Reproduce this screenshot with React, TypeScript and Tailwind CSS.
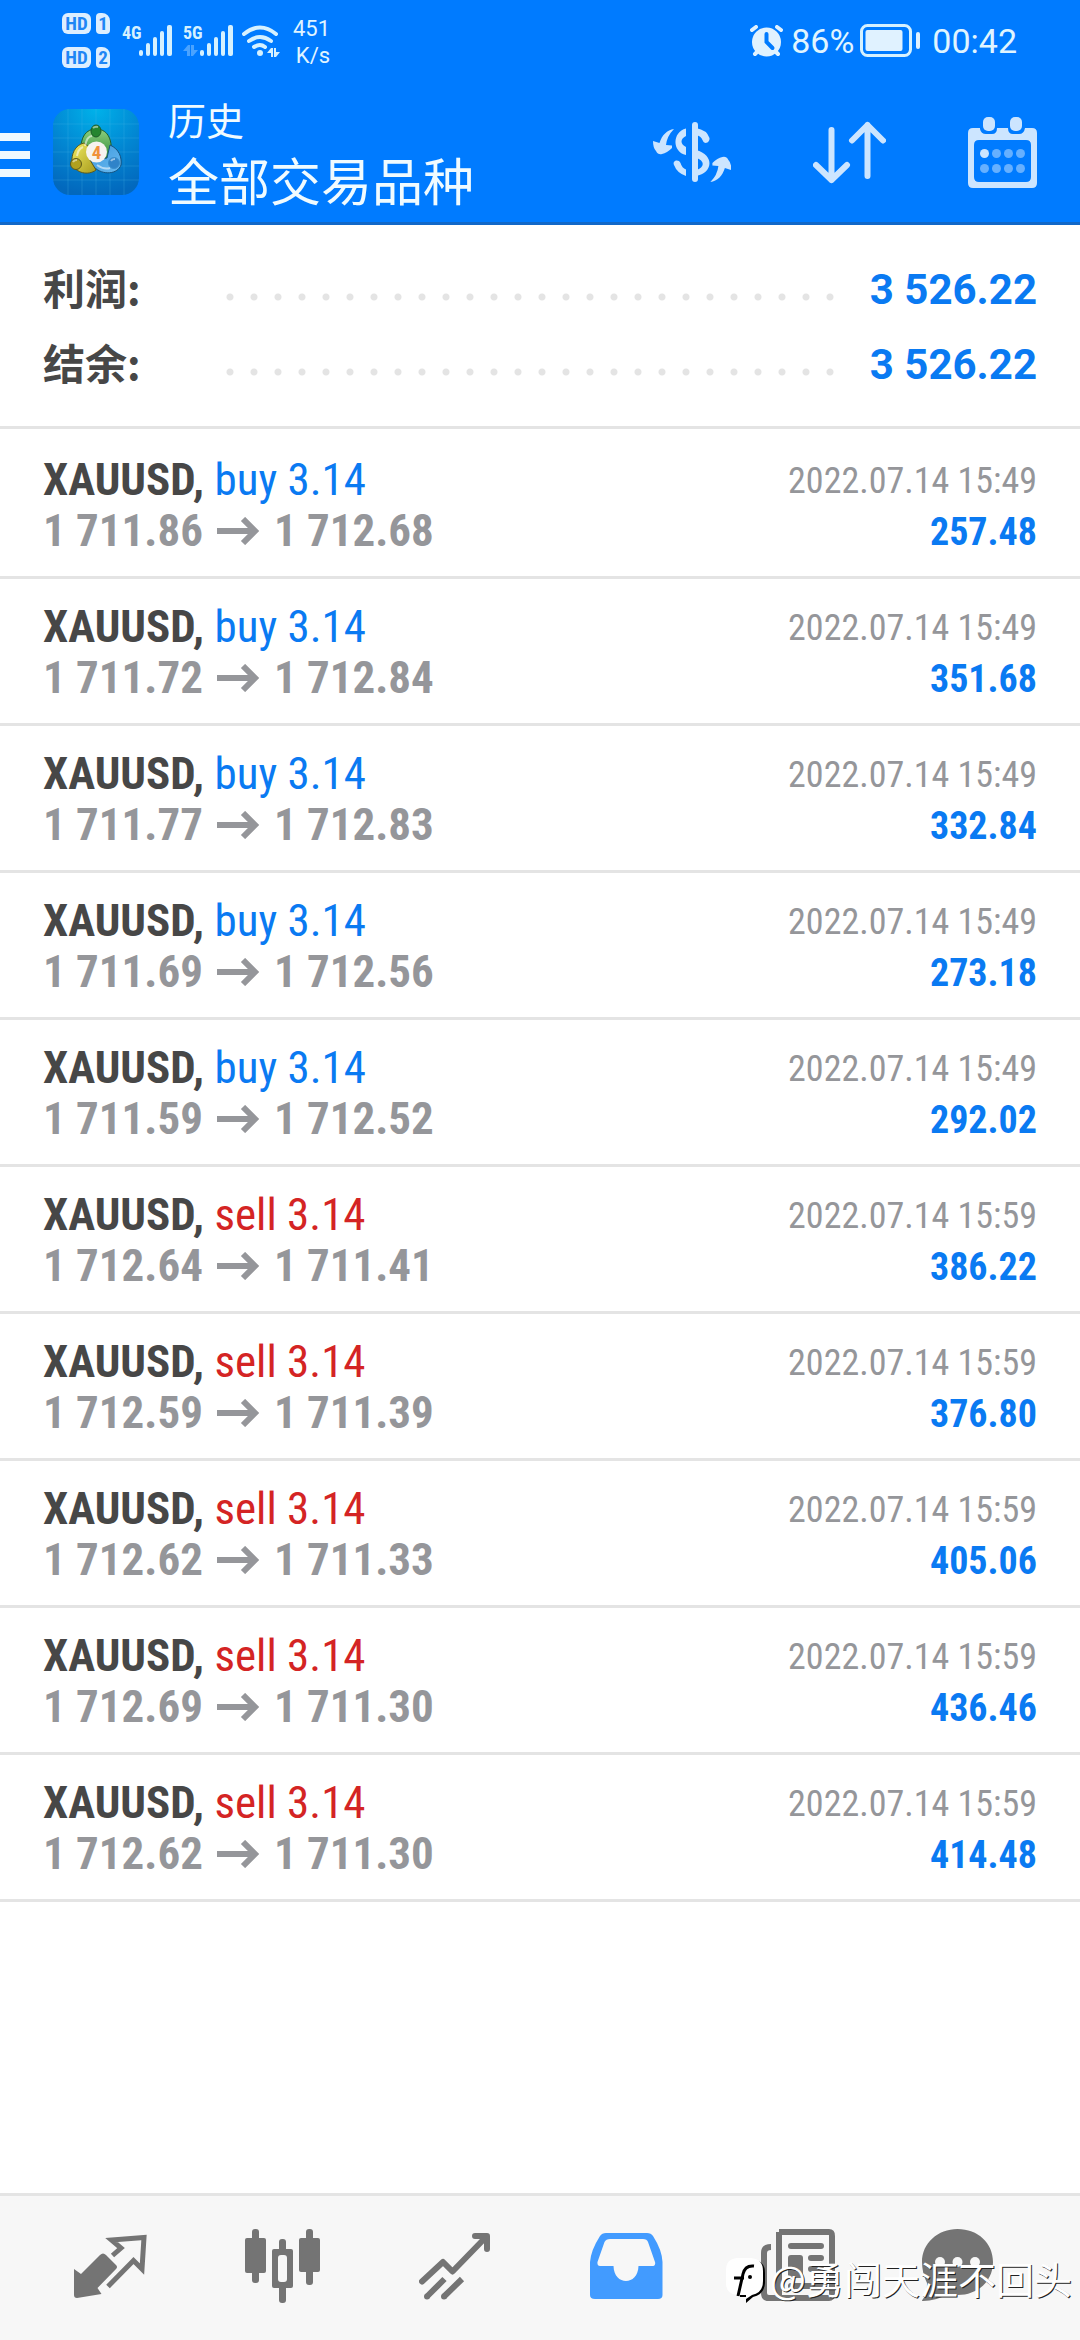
type Trade = {
	side: "buy" | "sell";
	open: string;
	close: string;
	time: string;
	profit: string;
};

const trades: Trade[] = [
	{ side: "buy", open: "1 711.86", close: "1 712.68", time: "2022.07.14 15:49", profit: "257.48" },
	{ side: "buy", open: "1 711.72", close: "1 712.84", time: "2022.07.14 15:49", profit: "351.68" },
	{ side: "buy", open: "1 711.77", close: "1 712.83", time: "2022.07.14 15:49", profit: "332.84" },
	{ side: "buy", open: "1 711.69", close: "1 712.56", time: "2022.07.14 15:49", profit: "273.18" },
	{ side: "buy", open: "1 711.59", close: "1 712.52", time: "2022.07.14 15:49", profit: "292.02" },
	{ side: "sell", open: "1 712.64", close: "1 711.41", time: "2022.07.14 15:59", profit: "386.22" },
	{ side: "sell", open: "1 712.59", close: "1 711.39", time: "2022.07.14 15:59", profit: "376.80" },
	{ side: "sell", open: "1 712.62", close: "1 711.33", time: "2022.07.14 15:59", profit: "405.06" },
	{ side: "sell", open: "1 712.69", close: "1 711.30", time: "2022.07.14 15:59", profit: "436.46" },
	{ side: "sell", open: "1 712.62", close: "1 711.30", time: "2022.07.14 15:59", profit: "414.48" },
];

const summary: [label: string, value: string][] = [
	["利润:", "3 526.22"],
	["结余:", "3 526.22"],
];

function HdBadge({ sim }: { sim: string }) {
	return (
		<div className="flex gap-[5px] font-['Roboto_Condensed',Roboto,sans-serif] font-bold text-[#1f86f5] text-[19px] leading-[21px]">
			<span className="w-[29px] rounded-md bg-[#dceeff] text-center">HD</span>
			<span className="w-[14px] rounded-sm rounded-tr-lg bg-[#dceeff] text-center">{sim}</span>
		</div>
	);
}

function SignalBars() {
	return (
		<svg width="33" height="31" viewBox="0 0 33 31" fill="#d5f1ff">
			<rect x="0" y="25" width="4" height="6" rx="2" />
			<rect x="7" y="18" width="4" height="13" rx="2" />
			<rect x="14" y="12" width="4" height="19" rx="2" />
			<rect x="21" y="6" width="4" height="25" rx="2" />
			<rect x="28" y="0" width="5" height="31" rx="2" />
		</svg>
	);
}

function NetworkLabel({ text, active }: { text: string; active?: boolean }) {
	return (
		<div className="flex h-[31px] w-[17px] flex-col justify-between font-['Roboto_Condensed',Roboto,sans-serif] font-bold text-[#d5f1ff] text-[18px] leading-[15px]">
			{text}
			{active && (
				<svg width="15" height="11" viewBox="0 0 15 11" fill="#4aa3ff">
					<path d="M0 6 5 0h2v11H4V6zM8 0h3v5h4l-5 6H8z" />
				</svg>
			)}
		</div>
	);
}

function WifiIcon() {
	return (
		<svg width="39" height="32" viewBox="0 0 39 32" fill="none" stroke="#d5f1ff" strokeWidth="4" strokeLinecap="round">
			<path d="M2 9Q18-4 34 9M7 16q11-8 22 0M12 22q6-4 11 0" />
			<circle cx="18" cy="28" r="3" fill="#d5f1ff" stroke="none" />
			<path d="M25 28l4-5h2v9h-2v-4zM32 23h2v4h4l-4 5h-2z" fill="#d5f1ff" stroke="none" />
		</svg>
	);
}

function AlarmIcon() {
	return (
		<svg width="33" height="32" viewBox="0 0 33 32" fill="none" strokeLinecap="round">
			<path d="M2 5l4-3M31 5l-4-3M5 29l3-3M28 29l-3-3" stroke="#e0f2ff" strokeWidth="4" />
			<circle cx="16.5" cy="17" r="14.5" fill="#e0f2ff" />
			<path d="M16.5 9v8l6 6" stroke="#007bff" strokeWidth="4" />
		</svg>
	);
}

function BatteryIcon() {
	return (
		<svg width="60" height="33" viewBox="0 0 60 33" fill="#e0f2ff">
			<rect x="1.5" y="1.5" width="49" height="30" rx="6" fill="none" stroke="#d5f1ff" strokeWidth="3" />
			<rect x="5.5" y="6" width="37" height="21" rx="2" />
			<rect x="56" y="8" width="4" height="17" rx="2" />
		</svg>
	);
}

function StatusBar() {
	return (
		<div className="flex h-20 items-center pt-px pr-[63px] pl-[62px] font-['Roboto',sans-serif] text-[#e0f5ff]">
			<div className="flex flex-col gap-[13px]">
				<HdBadge sim="1" />
				<HdBadge sim="2" />
			</div>
			<div className="ml-3 flex">
				<NetworkLabel text="4G" />
				<SignalBars />
			</div>
			<div className="ml-[11px] flex">
				<NetworkLabel text="5G" active />
				<SignalBars />
			</div>
			<div className="ml-[9px]">
				<WifiIcon />
			</div>
			<p className="ml-3 pt-[2px] text-right text-[22px] leading-[27px]">
				451
				<br />
				K/s
			</p>
			<div className="ml-auto flex items-center text-[34px] leading-10">
				<AlarmIcon />
				<span className="mr-[6px] ml-2">86%</span>
				<BatteryIcon />
				<span className="ml-3">00:42</span>
			</div>
		</div>
	);
}

function AppLogo() {
	return (
		<svg width="86" height="86" viewBox="0 0 86 86">
			<defs>
				<radialGradient id="logo-bg" cx="0.5" cy="0" r="1">
					<stop offset="0" stopColor="#00b2ea" />
					<stop offset="0.55" stopColor="#0286d2" />
					<stop offset="1" stopColor="#0268bd" />
				</radialGradient>
				<linearGradient id="logo-green" x1="0" y1="0" x2="0" y2="1">
					<stop offset="0" stopColor="#8fd07f" />
					<stop offset="1" stopColor="#2b8a34" />
				</linearGradient>
				<linearGradient id="logo-yellow" x1="0" y1="0" x2="1" y2="1">
					<stop offset="0" stopColor="#f1ec62" />
					<stop offset="1" stopColor="#a79a1c" />
				</linearGradient>
				<linearGradient id="logo-blue" x1="0" y1="0" x2="1" y2="1">
					<stop offset="0" stopColor="#3b96dc" />
					<stop offset="1" stopColor="#69baf0" />
				</linearGradient>
			</defs>
			<rect width="86" height="86" rx="17" fill="url(#logo-bg)" />
			<path d="M0 15h86M0 29h86M0 43h86M0 57h86M0 71h86M15 0v86M29 0v86M43 0v86M57 0v86M71 0v86" stroke="#4fb6ea" strokeOpacity="0.25" />
			<path d="M28 43C27 28 33 20 43 20s17 8 15 26l-6 4-20-2z" fill="url(#logo-green)" stroke="#1f5f2c" />
			<path d="M57 36c9 4 12 12 11 20-3 9-18 11-27 2l-5-6 18-3z" fill="url(#logo-blue)" stroke="#15527f" />
			<path d="M31 34c-9 2-13 11-12 21 4 9 16 12 24 6l-6-10 3-10z" fill="url(#logo-yellow)" stroke="#5d5a1c" />
			<path d="M32 37q2-10 7-10M24 47q1-7 6-9M44 56q7 5 13 3" fill="none" stroke="#fff" strokeOpacity="0.55" strokeWidth="2" />
			<ellipse cx="43" cy="22" rx="5" ry="6" fill="#25852f" stroke="#1b5a27" />
			<circle cx="23" cy="55" r="5.5" fill="#b1a11f" stroke="#5d5a1c" />
			<circle cx="61" cy="54" r="5.5" fill="#2f83c9" stroke="#3b8ecb" />
			<path d="M40 19q2-2 5-1M20 53q1-2 4-2M58 52q1-2 4-2" fill="none" stroke="#fff" strokeOpacity="0.5" strokeWidth="2" />
			<circle cx="43.5" cy="43" r="10.5" fill="#f6f3ef" />
			<text x="43.5" y="50" textAnchor="middle" fontSize="19" fontWeight="700" fontFamily="Roboto Condensed, Roboto, sans-serif" fill="#f0913a">
				4
			</text>
		</svg>
	);
}

function CurrencyIcon() {
	const arrow = "M21 7C14 8 9 13 6.5 21L0 19Q0 26 3 29Q5 33 9 32Q14 31 19 26L19 23.5L13 23Q14 14 21 7z";
	return (
		<svg width="78" height="61" viewBox="0 0 78 61" fill="#cce5ff">
			<rect x="39" y="0" width="6" height="60" rx="3" />
			<path d="M33 6.5C19 10 19 30 33 33V25C27 22 27 17 33 14z" />
			<path d="M33 54Q24 51 21 43C19 38 26 37 27.5 41Q29 46 33 47.5z" />
			<path d="M43 6Q54 8 56.5 16C57 21 51 23 49.5 18Q48 14 43 13z" />
			<path d="M43 28C62 33 60 51 43 54V48C52 46 52 38 43 36z" />
			<path d={arrow} />
			<path d={arrow} transform="rotate(180 39.2 33.5)" />
		</svg>
	);
}

function SortIcon() {
	return (
		<svg width="73" height="63" viewBox="0 0 73 63" fill="none" stroke="#cce5ff" strokeWidth="6" strokeLinecap="round" strokeLinejoin="round">
			<path d="M18.5 9V59M3 44l15.5 15L34 44M54.5 55V4M39 19.5L54.5 4 70 19.5" />
		</svg>
	);
}

function CalendarIcon() {
	return (
		<svg width="69" height="71" viewBox="0 0 69 71" fill="#cce5ff">
			<path
				fillRule="evenodd"
				d="M5 11H12V12Q13 17 18 17H24Q29 17 29 11H40Q40 17 45 17H51Q56 17 57 11H64Q69 11 69 16V66Q69 71 64 71H5Q0 71 0 66V16Q0 11 5 11zM11 23Q6 23 6 28V60Q6 65 11 65H58Q63 65 63 60V28Q63 23 58 23z"
			/>
			<rect x="15" y="0" width="12" height="14" rx="5" />
			<rect x="42" y="0" width="12" height="14" rx="5" />
			<circle cx="16.5" cy="36.5" r="4.5" />
			<g fill="#66b0ff">
				<circle cx="28.5" cy="36.5" r="4.5" />
				<circle cx="40.5" cy="36.5" r="4.5" />
				<circle cx="52.5" cy="36.5" r="4.5" />
				<circle cx="16.5" cy="51.5" r="4.5" />
				<circle cx="28.5" cy="51.5" r="4.5" />
				<circle cx="40.5" cy="51.5" r="4.5" />
				<circle cx="52.5" cy="51.5" r="4.5" />
			</g>
		</svg>
	);
}

function Header() {
	return (
		<header className="border-[#1268c8] border-b-[3px] bg-[#007bff]">
			<StatusBar />
			<div className="flex h-[142px] items-center pt-[2px] pr-[43px]">
				<button type="button" aria-label="菜单" className="flex flex-col gap-[10px] pt-[6px]">
					<span className="h-2 w-[30px] bg-[#f0f9ff]" />
					<span className="h-2 w-[30px] bg-[#f0f9ff]" />
					<span className="h-2 w-[30px] bg-[#f0f9ff]" />
				</button>
				<div className="ml-[23px]">
					<AppLogo />
				</div>
				<div className="ml-[29px] pb-[5px] font-['Noto_Sans_CJK_SC',sans-serif] text-[#f0fbff]">
					<p className="text-[38px] leading-[58px]">历史</p>
					<h1 className="text-[51px] leading-[62px]">全部交易品种</h1>
				</div>
				<div className="ml-auto flex items-center gap-[82px]">
					<button type="button" aria-label="交易品种">
						<CurrencyIcon />
					</button>
					<button type="button" aria-label="排序">
						<SortIcon />
					</button>
					<button type="button" aria-label="日期">
						<CalendarIcon />
					</button>
				</div>
			</div>
		</header>
	);
}

function Summary() {
	return (
		<section className="border-[#e4e4e4] border-b-[3px] pt-[27px] pb-6">
			{summary.map(([label, value]) => (
				<div key={label} className="flex h-[75px] items-center px-[43px] font-bold text-[42px]">
					<span className="w-[175px] pb-[6px] font-['Noto_Sans_CJK_SC',sans-serif] text-[#474747]">{label}</span>
					<span className="mt-[14px] h-2 flex-1 bg-[radial-gradient(circle,#e4e4e4_3px,transparent_4px)] bg-[size:24px_8px]" />
					<span className="ml-[29px] font-['Roboto',sans-serif] text-[#0a7af2]">{value}</span>
				</div>
			))}
		</section>
	);
}

function TradeRow({ trade }: { trade: Trade }) {
	return (
		<li className="flex h-[147px] justify-between border-[#e4e4e4] border-b-[3px] px-[43px] pt-[22px] font-['Roboto_Condensed',Roboto,sans-serif] leading-[51px]">
			<div className="text-[45px]">
				<p>
					<span className="font-bold text-[#474747]">XAUUSD, </span>
					<span className={trade.side === "buy" ? "text-[#0a7af2]" : "text-[#d42424]"}>{trade.side} 3.14</span>
				</p>
				<p className="flex items-center font-bold text-[#95969a]">
					{trade.open}
					<svg width="43" height="28" viewBox="0 0 43 28" className="mx-[14px]" fill="none" stroke="currentColor" strokeWidth="6">
						<path d="M0 14H38M26 2L38 14 26 26" />
					</svg>
					{trade.close}
				</p>
			</div>
			<div className="pt-[2px] text-right">
				<p className="text-[#95969a] text-[36px]">{trade.time}</p>
				<p className="font-bold text-[#0a7af2] text-[38px]">{trade.profit}</p>
			</div>
		</li>
	);
}

function QuotesIcon() {
	return (
		<svg width="74" height="74" viewBox="-1 -6 74 74">
			<path d="M0 34 7 39 26 20Q29 17 32 20L42 30Q44 32 42 34L23.5 53 27.5 59 3 63Q0 63 0 60z" fill="currentColor" />
			<path d="M38.5 20.5 47 13 37.5 5 70 2.5 68 34 59.5 25.5 34 51.5" fill="none" stroke="currentColor" strokeWidth="5" />
		</svg>
	);
}

function CandlesIcon() {
	return (
		<svg width="75" height="74" viewBox="0 0 75 74" fill="currentColor">
			<rect x="7" y="0" width="7" height="54" rx="3" />
			<rect x="0" y="9" width="21" height="35" rx="2" />
			<rect x="61" y="0" width="7" height="56" rx="3" />
			<rect x="54" y="9" width="21" height="34" rx="2" />
			<rect x="34" y="10" width="7" height="64" rx="3" />
			<rect x="27" y="20" width="21" height="39" rx="2" />
			<rect x="33" y="26" width="9" height="27" rx="3" fill="#f7f7f7" />
		</svg>
	);
}

function TrendIcon() {
	return (
		<svg width="71" height="74" viewBox="0 -4 71 74" fill="none" stroke="currentColor" strokeWidth="6">
			<path d="M3 48.5 24 29 33.5 38.5 67 4M56 3H68V16" strokeLinecap="round" strokeLinejoin="round" />
			<path d="M25.5 46 8 63.5M43 46 25 63.5" />
			<path d="M8 63.5h.01M25 63.5h.01" strokeLinecap="round" />
		</svg>
	);
}

function HistoryIcon() {
	return (
		<svg width="73" height="74" viewBox="0 -4 73 74" fill="currentColor">
			<path
				fillRule="evenodd"
				d="M0 29Q1 17 10 3Q12 0 16 0H57Q61 0 63 3Q72 17 72.5 29V62Q72.5 66 68 66H5Q0 66 0 62zM20 6Q16 6 14.5 9L7.5 29Q7 33 10 33H23.5C24 53 48 53 48.5 33H62Q66 33 65 29L58 9Q57 6 53 6z"
			/>
		</svg>
	);
}

function NewsIcon() {
	return (
		<svg width="74" height="72" viewBox="0 0 74 72" fill="none" stroke="currentColor" strokeWidth="6">
			<path d="M18 3H68Q71 3 71 7V65Q71 69 68 69H8Q3 69 3 64V24Q3 18 10 18M18 3V66" />
			<path d="M30 17H60M50 29H60M50 40H60M30 57H60" strokeLinecap="round" />
			<rect x="27" y="26" width="15" height="23" rx="3" fill="currentColor" stroke="none" />
		</svg>
	);
}

function ChatIcon() {
	return (
		<svg width="96" height="72" viewBox="0 0 96 72" fill="currentColor">
			<path d="M35.5 0C56 0 71 14 71 33S56 66 35.5 66Q30 66 26 65Q14 72 1 72Q-1 72 1 70Q5 65 5 54Q0 44 0 33C0 14 16 0 35.5 0z" />
			<g fill="#f7f7f7">
				<circle cx="18" cy="33" r="5" />
				<circle cx="35.5" cy="33" r="5" />
				<circle cx="53" cy="33" r="5" />
			</g>
		</svg>
	);
}

const tabs = [
	{ label: "行情", icon: <QuotesIcon /> },
	{ label: "图表", icon: <CandlesIcon /> },
	{ label: "交易", icon: <TrendIcon /> },
	{ label: "历史", icon: <HistoryIcon />, active: true },
	{ label: "新闻", icon: <NewsIcon /> },
	{ label: "消息", icon: <ChatIcon /> },
];

function TabBar() {
	return (
		<nav className="relative mt-auto flex h-[147px] items-start border-[#e4e4e4] border-t-[3px] bg-[#f7f7f7] px-6 pt-[33px]">
			{tabs.map((tab) => (
				<button
					key={tab.label}
					type="button"
					aria-label={tab.label}
					className={`flex flex-1 basis-0 justify-center ${tab.active ? "text-[#429bff]" : "text-[#747474]"}`}
				>
					{tab.icon}
				</button>
			))}

			{/* author mark, floats over the tabs */}
			<div className="pointer-events-none absolute right-2 bottom-9 flex items-start font-['Noto_Sans_CJK_SC',sans-serif] text-[38px] text-white leading-[52px] [text-shadow:1px_1px_0_#222]">
				<svg width="40" height="46" viewBox="0 0 40 46" className="mt-[6px] mr-1">
					<path d="M14 2H28Q39 3 39 15V25Q38 37 27 39L20 45V39H14z" fill="#000" />
					<path d="M11 0H25Q37 1 37 13V23Q37 35 26 37L20 41V37H11Q0 36 0 25V12Q0 1 11 0z" fill="#fff" />
					<path d="M28 8Q19 7 17 16L12 38M8 20H18" fill="none" stroke="#000" strokeWidth="3" />
					<circle cx="24" cy="19" r="2" fill="#000" />
				</svg>
				@勇闯天涯不回头
			</div>
		</nav>
	);
}

export default function App() {
	return (
		<div className="flex min-h-screen flex-col bg-white">
			<Header />
			<main>
				<Summary />
				<ul className="pt-[3px]">
					{trades.map((trade, i) => (
						<TradeRow key={i} trade={trade} />
					))}
				</ul>
			</main>
			<TabBar />
		</div>
	);
}
